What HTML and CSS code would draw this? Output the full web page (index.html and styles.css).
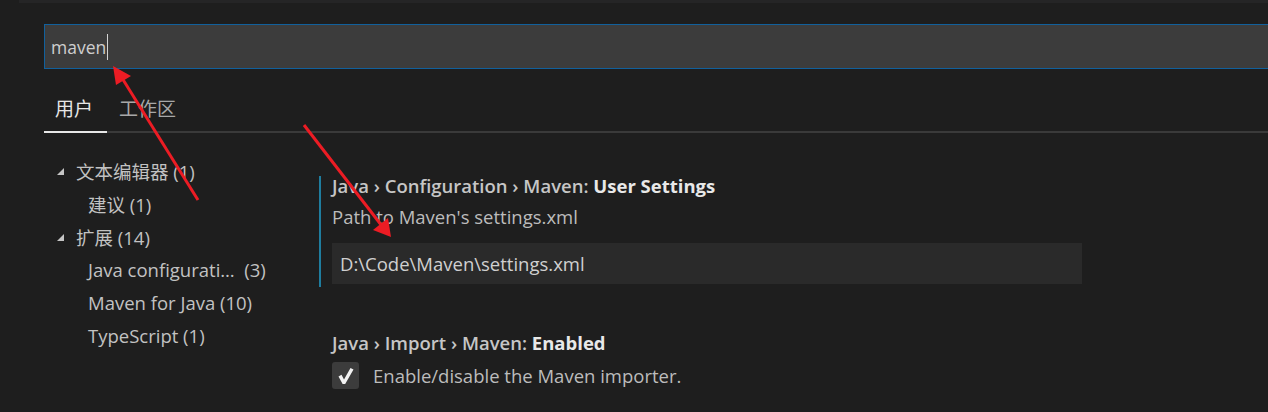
FILE: index.html
```html
<!DOCTYPE html>
<html lang="zh-CN">
<head>
<meta charset="utf-8">
<title>Settings</title>
<link rel="stylesheet" href="styles.css">
</head>
<body>
<div class="page">
  <div class="topstrip"></div>
  <div class="header">
    <div class="search"><span class="search-text">maven</span><span class="caret"></span></div>
    <div class="tabs">
      <div class="tab active">用户</div>
      <div class="tab">工作区</div>
    </div>
  </div>
  <div class="main">
    <div class="tree">
      <div class="row"><span class="twisty"></span><span>文本编辑器 (1)</span></div>
      <div class="row child"><span>建议 (1)</span></div>
      <div class="row"><span class="twisty"></span><span>扩展 (14)</span></div>
      <div class="row child"><span>Java configurati…&nbsp;&nbsp;(3)</span></div>
      <div class="row child"><span>Maven for Java (10)</span></div>
      <div class="row child"><span>TypeScript (1)</span></div>
    </div>
    <div class="settings">
      <div class="setting focused">
        <div class="title"><span class="cat">Java › Configuration › Maven: </span><span class="label">User Settings</span></div>
        <div class="desc">Path to Maven's settings.xml</div>
        <div class="input">D:\Code\Maven\settings.xml</div>
      </div>
      <div class="setting second">
        <div class="title"><span class="cat">Java › Import › Maven: </span><span class="label">Enabled</span></div>
        <div class="check-row">
          <span class="checkbox"><svg width="27" height="27" viewBox="0 0 27 27"><path d="M6.5 14.5 L9.5 12.8 L12 17.5 L18.5 6 L21.5 7.5 L13.2 22 L10.6 22 Z" fill="#f2f2f2"/></svg></span>
          <span class="desc">Enable/disable the Maven importer.</span>
        </div>
      </div>
    </div>
  </div>
  <svg class="arrows" width="1268" height="412" viewBox="0 0 1268 412">
    <line x1="198" y1="200" x2="122" y2="78" stroke="#ec1c24" stroke-width="3"/>
    <polygon points="113,66 116,85 131,76" fill="#ec1c24"/>
    <line x1="304" y1="125" x2="382" y2="226" stroke="#ec1c24" stroke-width="3"/>
    <polygon points="391,237 373,230 388,218" fill="#ec1c24"/>
  </svg>
</div>
</body>
</html>
```
FILE: styles.css
```css
html, body {
  margin: 0;
  padding: 0;
  background: #1e1e1e;
}
.page {
  position: relative;
  width: 1268px;
  height: 412px;
  overflow: hidden;
  font-family: "Open Sans", "Noto Sans CJK SC", sans-serif;
  color: #cccccc;
}
.topstrip {
  height: 3px;
  margin-left: 19px;
  background: #252526;
}
.header {
  padding: 21px 0 0 44px;
}
.search {
  height: 43px;
  margin-right: -20px;
  border: 1px solid #11609c;
  background: #3c3c3c;
  display: flex;
  align-items: center;
  padding-left: 6px;
  font-size: 17.5px;
  color: #cfcfcf;
}
.caret {
  width: 1px;
  height: 26px;
  background: #d4d4d4;
  margin-left: 1px;
}
.tabs {
  display: flex;
  margin-top: 21px;
  border-bottom: 2px solid #3a3a3a;
  height: 41px;
}
.tab {
  font-size: 19px;
  line-height: 36px;
  padding: 0 0 0 12px;
  color: #a8a8a8;
  margin-bottom: -2px;
  font-family: "Noto Sans CJK SC", sans-serif;
}
.tab.active {
  color: #e6e6e6;
  border-bottom: 2px solid #e7e7e7;
  width: 52px;
  padding: 0 0 0 11px;
}
.main {
  display: flex;
  padding-top: 21px;
}
.tree {
  width: 275px;
  padding-left: 44px;
  font-size: 18.5px;
}
.row {
  height: 33px;
  display: flex;
  align-items: center;
  padding-left: 13px;
  color: #c2c2c2;
  white-space: nowrap;
}
.row.child {
  padding-left: 44px;
}
.twisty {
  width: 0;
  height: 0;
  border-left: 7px solid transparent;
  border-bottom: 7px solid #c5c5c5;
  margin-right: 12px;
  margin-top: 1px;
}
.settings {
  flex: 1;
  padding-top: 22px;
}
.setting {
  padding-left: 11px;
  border-left: 2px solid transparent;
}
.setting.focused {
  border-left: 2px solid #1f7d9f;
  padding-bottom: 3px;
}
.title {
  font-size: 18.5px;
  font-weight: 600;
  line-height: 20px;
  color: #c6c6c6;
}
.title .label {
  color: #e8e8e8;
  font-weight: 700;
}
.desc {
  font-size: 18.5px;
  line-height: 22px;
  margin-top: 10px;
  color: #bcbcbc;
}
.input {
  margin-top: 15px;
  width: 742px;
  height: 41px;
  background: #2a2a2a;
  font-size: 18.5px;
  line-height: 41px;
  padding-left: 8px;
  color: #d0d0d0;
}
.second {
  margin-top: 46px;
}
.check-row {
  display: flex;
  align-items: center;
  margin-top: 9px;
}
.checkbox {
  width: 27px;
  height: 27px;
  border-radius: 3px;
  background: #3c3c3c;
  display: block;
}
.checkbox svg {
  display: block;
}
.check-row .desc {
  margin: 0 0 0 14px;
}
.arrows {
  position: absolute;
  left: 0;
  top: 0;
  pointer-events: none;
}
```
